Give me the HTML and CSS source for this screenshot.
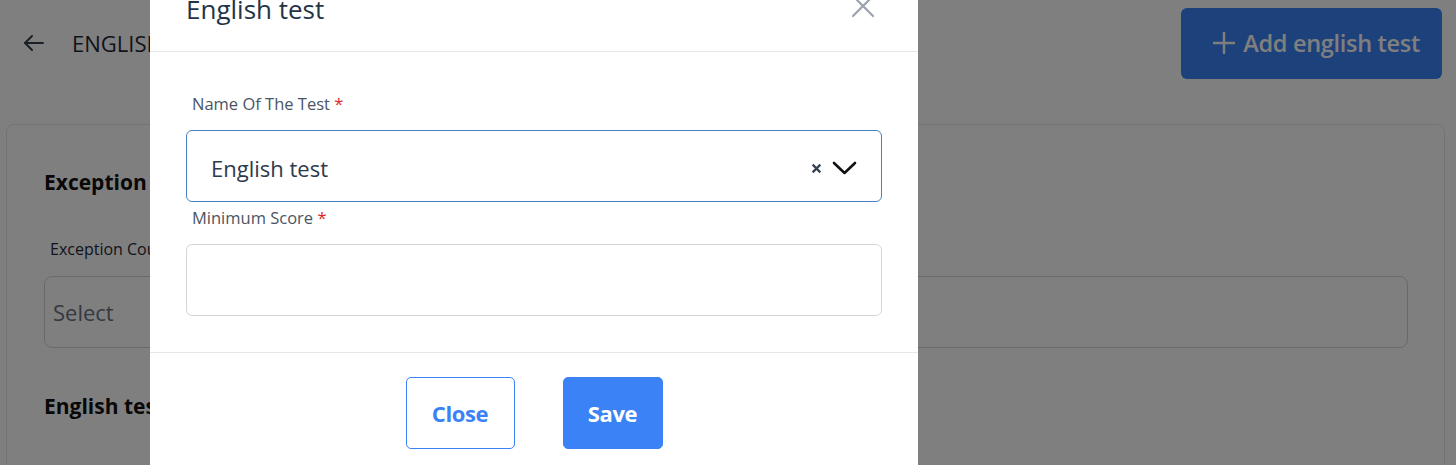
FILE: index.html
```html
<!DOCTYPE html>
<html lang="en">
<head>
  <meta charset="UTF-8">
  <meta name="viewport" content="width=device-width, initial-scale=1.0">
  <title>English Tests</title>
  <link rel="stylesheet" href="styles.css">
</head>
<body>
  <div class="page">
    <header class="page-head">
      <div class="page-title">
        <svg class="back-icon" width="24" height="24" viewBox="0 0 24 24" fill="none" stroke="currentColor" stroke-width="2" stroke-linecap="round" stroke-linejoin="round">
          <path d="M21 12H3"/>
          <path d="M10 5l-7 7 7 7"/>
        </svg>
        <span>ENGLISH TESTS</span>
      </div>
      <button class="btn-add">
        <svg width="24" height="24" viewBox="0 0 24 24" fill="none" stroke="currentColor" stroke-width="2.4">
          <path d="M12 1v22M1 12h22"/>
        </svg>
        Add english test
      </button>
    </header>

    <section class="card">
      <h3 class="card-heading">Exception Countries</h3>
      <label class="card-label">Exception Countries</label>
      <div class="card-select">Select</div>
      <h3 class="card-heading second">English tests</h3>
    </section>
  </div>

  <!-- modal lies over the page -->
  <div class="overlay">
    <div class="modal">
      <div class="modal-head">
        <h2 class="modal-title">English test</h2>
        <svg class="modal-x" width="24" height="24" viewBox="0 0 24 24" fill="none" stroke="currentColor" stroke-width="2.2" stroke-linecap="round">
          <path d="M2 2l20 20M22 2L2 22"/>
        </svg>
      </div>

      <div class="modal-body">
        <label class="field-label">Name Of The Test <span class="req">*</span></label>
        <div class="field select">
          <span class="select-value">English test</span>
          <span class="select-tools">
            <svg width="11" height="11" viewBox="0 0 10 10" fill="none" stroke="#374151" stroke-width="2">
              <path d="M1.5 1.5l7 7M8.5 1.5l-7 7"/>
            </svg>
            <svg width="25" height="14" viewBox="0 0 25 14" fill="none" stroke="#111" stroke-width="2.6" stroke-linecap="round" stroke-linejoin="round">
              <path d="M2 2l10.5 10L23 2"/>
            </svg>
          </span>
        </div>

        <label class="field-label gap">Minimum Score <span class="req">*</span></label>
        <div class="field"></div>
      </div>

      <div class="modal-foot">
        <button class="btn btn-outline">Close</button>
        <button class="btn btn-primary">Save</button>
      </div>
    </div>
  </div>
</body>
</html>
```

FILE: styles.css
```css
body {
  margin: 0;
  background: #fff;
  font-family: "Open Sans", "Noto Sans", sans-serif;
  color: #1f2937;
}

.page {
  padding: 0 11px 0 6px;
}

.page-head {
  display: flex;
  align-items: center;
  justify-content: space-between;
  height: 86px;
  padding: 0 0 0 16px;
}

.page-title {
  display: flex;
  align-items: center;
  gap: 26px;
  font-size: 22px;
  font-weight: 500;
  color: #1f2937;
}

.back-icon {
  color: #374151;
}

.btn-add {
  display: flex;
  align-items: center;
  gap: 7px;
  height: 71px;
  padding: 0 22px 0 31px;
  margin-right: 3px;
  border: none;
  border-radius: 6px;
  background: #3b82f6;
  color: #fff;
  font-family: inherit;
  font-size: 23.5px;
  font-weight: 600;
  letter-spacing: -0.3px;
}

.card {
  margin-top: 38px;
  border: 1px solid #e5e7eb;
  border-radius: 8px;
  padding: 43px 36px 40px 37px;
  min-height: 300px;
}

.card-heading {
  margin: 0;
  font-size: 21px;
  font-weight: 700;
  color: #111;
}

.card-heading.second {
  margin-top: 44px;
}

.card-label {
  display: block;
  margin: 42px 0 16px 6px;
  font-size: 16px;
  color: #1f2937;
}

.card-select {
  height: 72px;
  box-sizing: border-box;
  border: 1px solid #d1d5db;
  border-radius: 8px;
  display: flex;
  align-items: center;
  padding-left: 8px;
  font-size: 22px;
  color: #6b7280;
}

.overlay {
  position: fixed;
  inset: 0;
  background: rgba(0, 0, 0, 0.5);
  overflow: hidden;
}

.modal {
  width: 768px;
  margin: -40px 0 0 150px;
  background: #fff;
  min-height: 560px;
}

.modal-head {
  display: flex;
  align-items: center;
  justify-content: space-between;
  padding: 34px 43px 27px 36px;
  border-bottom: 1px solid #e5e7eb;
}

.modal-x {
  margin-top: -6px;
  color: #9ca3af;
}

.modal-title {
  margin: 0;
  font-size: 26px;
  line-height: 30px;
  font-weight: 500;
  color: #243447;
}

.modal-body {
  padding: 41px 36px 36px;
  border-bottom: 1px solid #e5e7eb;
}

.field-label {
  display: block;
  margin: 0 0 15px 6px;
  font-size: 16.5px;
  line-height: 22px;
  color: #4b5563;
}

.field-label.gap {
  margin-top: 5px;
}

.req {
  color: #dc2626;
}

.field {
  height: 72px;
  box-sizing: border-box;
  border: 1px solid #d1d5db;
  border-radius: 6px;
}

.select {
  display: flex;
  align-items: center;
  justify-content: space-between;
  padding: 4px 24px 0 24px;
  border-color: #4a7fc1;
}

.select-value {
  font-size: 22px;
  color: #2d3a4b;
}

.select-tools {
  display: flex;
  align-items: center;
  gap: 10px;
}

.modal-foot {
  display: flex;
  justify-content: center;
  gap: 48px;
  padding: 24px 0;
}

.btn {
  height: 72px;
  border-radius: 5px;
  font-family: inherit;
  font-size: 22px;
  font-weight: 700;
  letter-spacing: -0.4px;
}

.btn-outline {
  width: 109px;
  background: #fff;
  border: 1px solid #3b82f6;
  color: #3b82f6;
}

.btn-primary {
  width: 100px;
  background: #3b82f6;
  border: 1px solid #3b82f6;
  color: #fff;
}
```
